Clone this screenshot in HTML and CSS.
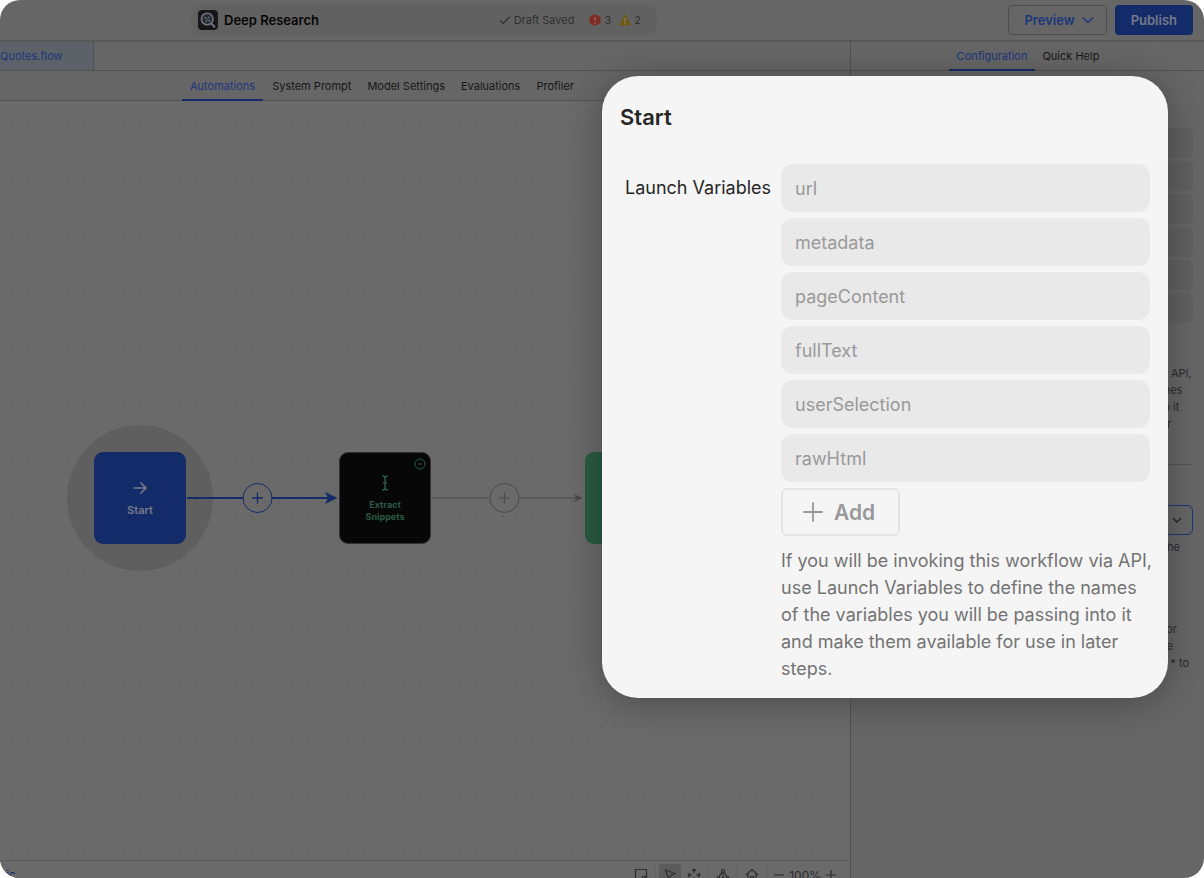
FILE: index.html
```html
<!DOCTYPE html>
<html lang="en">
<head>
<meta charset="utf-8">
<title>Deep Research</title>
<link rel="stylesheet" href="styles.css">
</head>
<body>
<div class="window">
  <div class="app">
    <header class="header">
      <div class="header-main">
        <div class="title-pill">
          <svg class="logo" viewBox="0 0 20 20" aria-hidden="true">
            <rect width="20" height="20" rx="4" fill="#161616"/>
            <circle cx="9.2" cy="9" r="5.8" fill="#2b2c33" stroke="#74727f" stroke-width="1.6"/>
            <path d="M13.400 13.600l3 3.200" stroke="#74727f" stroke-width="2" stroke-linecap="round"/>
            <path d="M7 7.400l4.400 3.400M11 7l-3 4.600" stroke="#64757a" stroke-width=".6"/>
            <circle cx="7.200" cy="7.800" r=".9" fill="#64757a"/><circle cx="10.800" cy="7.200" r=".8" fill="#64757a"/><circle cx="11.200" cy="10.600" r=".9" fill="#64757a"/><circle cx="8.200" cy="11.200" r=".8" fill="#64757a"/>
          </svg>
          <h1 class="app-name">Deep Research</h1>
          <span class="saved"><svg width="12" height="12" viewBox="0 0 12 12" fill="none" stroke="currentColor" stroke-width="1.2"><path d="M1 6.3l3.2 3.2L11 2.6"/></svg>Draft Saved</span>
          <span class="count"><svg width="12" height="12" viewBox="0 0 12 12"><path d="M6 0l5.500 3v6L6 12 .5 9V3z" fill="#7e2d22"/><path d="M6 3v3.600M6 8v1.200" stroke="#8c8480" stroke-width="1.100"/></svg>3</span>
          <span class="count"><svg width="12" height="12" viewBox="0 0 12 12"><path d="M6 1.200l5.300 9.600H.7z" fill="#6e5a14" stroke="#6e5a14" stroke-width="1.200" stroke-linejoin="round"/><path d="M6 4v3.400M6 8.600v1.200" stroke="#8c8480" stroke-width="1.100"/></svg>2</span>
        </div>
      </div>
      <div class="header-actions">
        <button class="btn btn-outline" type="button">Preview<svg width="12" height="8" viewBox="0 0 12 8" fill="none" stroke="currentColor" stroke-width="1.300"><path d="M1 1.500l5 5 5-5"/></svg></button>
        <button class="btn btn-solid" type="button">Publish</button>
      </div>
    </header>

    <div class="body">
      <main class="editor">
        <div class="file-tabs"><a class="file-tab" href="#flow">Quotes.flow</a></div>
        <nav class="tabs editor-tabs">
          <a class="tab active" href="#automations">Automations</a>
          <a class="tab" href="#prompt">System Prompt</a>
          <a class="tab" href="#model">Model Settings</a>
          <a class="tab" href="#evaluations">Evaluations</a>
          <a class="tab" href="#profiler">Profiler</a>
        </nav>
        <section class="canvas">
          <div class="halo"></div>
          <svg class="edge edge-active" width="152" height="32" viewBox="0 0 152 32" fill="none" stroke="#142b69">
            <path d="M0 16h56M85 16h58" stroke-width="2.200"/>
            <circle cx="70.500" cy="16" r="14.500" stroke-width="1"/>
            <path d="M70.500 10.500v11M65 16h11" stroke-width="1.300"/>
            <path d="M138 10l12.500 6-12.500 6 3-6z" fill="#142b69" stroke="none"/>
          </svg>
          <svg class="edge edge-idle" width="152" height="32" viewBox="0 0 152 32" fill="none" stroke="#4a4a4a">
            <path d="M0 16h57M87 16h58" stroke-width="1.200"/>
            <circle cx="72.500" cy="16" r="14.500" stroke-width="1"/>
            <path d="M72.500 10.500v11M67 16h11" stroke-width="1.200"/>
            <path d="M142 12l8.500 4-8.500 4 2-4z" fill="#4a4a4a" stroke="none"/>
          </svg>
          <div class="node node-start">
            <svg width="16" height="14" viewBox="0 0 16 14" fill="none" stroke="currentColor" stroke-width="1.500"><path d="M1.500 7h12M8.500 1.500L14 7l-5.500 5.500"/></svg>
            <span>Start</span>
          </div>
          <div class="node node-extract">
            <svg class="collapse" width="12" height="12" viewBox="0 0 12 12" fill="none" stroke="currentColor"><circle cx="6" cy="6" r="5"/><path d="M4 6h4"/></svg>
            <svg width="8" height="16" viewBox="0 0 8 16" fill="none" stroke="currentColor" stroke-width="1.500"><path d="M1 1q3 0 3 2v10q0 2-3 2M7 1Q4 1 4 3v10q0 2 3 2M2 8h4"/></svg>
            <span>Extract<br>Snippets</span>
          </div>
          <div class="node node-next"></div>
        </section>
        <footer class="toolbar">
          <span class="status">tic</span>
          <div class="tools">
            <button class="tool" type="button" aria-label="Note"><svg viewBox="0 0 14 14"><path d="M8.500 12.500H1.500v-11h11v7M8.500 12.500v-4h4z"/></svg></button>
            <i class="sep"></i>
            <button class="tool selected" type="button" aria-label="Select"><svg viewBox="0 0 14 14"><path d="M2.500 2l9.500 3.500-4.200 1.800L6 12z"/></svg></button>
            <button class="tool" type="button" aria-label="Move"><svg viewBox="0 0 14 14"><path d="M7 1v4M5 2.800L7 1l2 1.800M7 13V9M5 11.200L7 13l2-1.800M1 7h4M2.800 5L1 7l1.800 2M13 7H9M11.200 5L13 7l-1.800 2"/></svg></button>
            <i class="sep"></i>
            <button class="tool" type="button" aria-label="Arrange"><svg viewBox="0 0 14 14"><circle cx="7" cy="3" r="1.500"/><circle cx="2.500" cy="10" r="1.300"/><circle cx="11.500" cy="10" r="1.300"/><circle cx="7" cy="11" r="1.300"/><path d="M6 4.200L3 8.800M8 4.200l3 4.600M7 4.500v5"/></svg></button>
            <i class="sep"></i>
            <button class="tool" type="button" aria-label="Home"><svg viewBox="0 0 14 14"><path d="M1 7l6-5.500L13 7M3 5.500v7h8v-7M5.500 12.500v-4h3v4"/></svg></button>
            <i class="sep"></i>
            <div class="zoom">
              <button class="tool zoom-btn" type="button" aria-label="Zoom out"><svg viewBox="0 0 14 14"><path d="M2 7h10"/></svg></button>
              <span>100%</span>
              <button class="tool zoom-btn" type="button" aria-label="Zoom in"><svg viewBox="0 0 14 14"><path d="M2 7h10M7 2v10"/></svg></button>
            </div>
          </div>
        </footer>
      </main>

      <aside class="panel">
        <nav class="tabs panel-tabs">
          <a class="tab active" href="#configuration">Configuration</a>
          <a class="tab" href="#help">Quick Help</a>
        </nav>
        <div class="panel-body">
          <div class="panel-fields"><i></i><i></i><i></i><i></i><i></i><i></i></div>
          <p class="panel-help">If you will be invoking this workflow via API,<br>use Launch Variables to define the names<br>of the variables you will be passing into it<br>and make them available for use in later<br>steps.</p>
          <hr class="rule">
          <div class="combo"><svg width="10" height="7" viewBox="0 0 10 7" fill="none" stroke="#222" stroke-width="1.300"><path d="M1 1l4 4 4-4"/></svg></div>
          <p class="panel-note note-mid">the</p>
          <div class="panel-extra">
            <p class="panel-note note-near">for</p>
            <p class="panel-note note-far">the</p>
            <p class="panel-note note-end">* to</p>
          </div>
        </div>
      </aside>
    </div>
  </div>

  <section class="dialog" role="dialog" aria-labelledby="dialog-title">
    <h2 id="dialog-title" class="dialog-title">Start</h2>
    <div class="form-row">
      <label class="form-label" for="var-1">Launch Variables</label>
      <div class="form-fields">
        <input class="field" id="var-1" type="text" placeholder="url">
        <input class="field" type="text" placeholder="metadata" aria-label="Variable 2">
        <input class="field" type="text" placeholder="pageContent" aria-label="Variable 3">
        <input class="field" type="text" placeholder="fullText" aria-label="Variable 4">
        <input class="field" type="text" placeholder="userSelection" aria-label="Variable 5">
        <input class="field" type="text" placeholder="rawHtml" aria-label="Variable 6">
        <button class="add" type="button"><svg width="20" height="20" viewBox="0 0 20 20" fill="none" stroke="currentColor" stroke-width="1.800" stroke-linecap="round"><path d="M10 1v18M1 10h18"/></svg>Add</button>
        <p class="help">If you will be invoking this workflow via API, use Launch Variables to define the names of the variables you will be passing into it and make them available for use in later steps.</p>
      </div>
    </div>
  </section>
</div>
</body>
</html>
```
FILE: styles.css
```css
:root {
  --bg: #666;
  --canvas: #6a6a6a;
  --line: #515151;
  --blue: #142b69;
  --link: #1b367c;
}
* { box-sizing: border-box; }
body {
  margin: 0;
  background: #fff;
  font-family: Inter, "Liberation Sans", sans-serif;
  color: #161616;
}
h1, h2, p { margin: 0; }
button { font-family: inherit; }
.window {
  position: relative;
  height: 100vh;
  overflow: hidden;
  border-radius: 20px;
}
.app {
  display: flex;
  flex-direction: column;
  height: calc(100vh + 11px);
  background: var(--bg);
}

.header {
  display: grid;
  grid-template-columns: 1fr 356px;
  align-items: center;
  height: 42px;
  border-bottom: 2px solid #585858;
}
.header-main { display: flex; justify-content: center; }
.title-pill {
  display: flex;
  align-items: center;
  width: 466px;
  height: 30px;
  padding: 0 16px 0 7px;
  border-radius: 8px;
  background: #616161;
  font-size: 11px;
  color: #303030;
}
.logo { width: 20px; height: 20px; }
.app-name {
  flex: 1;
  margin-left: 6px;
  font-size: 13px;
  font-weight: 600;
  color: #060606;
}
.saved, .count { display: flex; align-items: center; gap: 3px; }
.saved { margin-right: 15px; }
.count + .count { margin-left: 8px; }
.header-actions {
  display: flex;
  justify-content: flex-end;
  gap: 8px;
  padding-right: 11px;
}
.btn {
  display: flex;
  align-items: center;
  gap: 7px;
  height: 30px;
  padding: 0 15px;
  border: 1px solid transparent;
  border-radius: 4px;
  font-size: 13px;
  font-weight: 600;
}
.btn-outline { padding-right: 12px; border-color: #4c4c4c; background: none; color: var(--link); }
.btn-solid { background: var(--blue); color: #75798a; }

.body { display: flex; flex: 1; min-height: 0; }
.editor { display: flex; flex: 1; flex-direction: column; min-width: 0; }
.file-tabs { display: flex; height: 29px; border-bottom: 1px solid var(--line); }
.file-tab {
  display: flex;
  align-items: center;
  width: 94px;
  border-right: 1px solid #4b5158;
  background: #5d6268;
  color: var(--link);
  font-size: 11px;
  text-decoration: none;
}
.tabs { display: flex; border-bottom: 1px solid var(--line); }
.tab {
  display: flex;
  align-items: center;
  margin-bottom: -1px;
  padding: 1px 7px 0;
  border-bottom: 2px solid transparent;
  color: #161616;
  font-size: 11px;
  text-decoration: none;
}
.tab.active { border-color: var(--blue); color: var(--link); padding: 1px 8px 0; }
.editor-tabs { gap: 2px; height: 30px; padding-left: 182px; }

.canvas {
  position: relative;
  flex: 1;
  overflow: hidden;
  background: var(--canvas) radial-gradient(circle at 13px 9px, #626262 1px, transparent 1px) 0 0 / 14px 14px;
}
.halo {
  position: absolute;
  left: 67px;
  top: 324px;
  width: 146px;
  height: 146px;
  border-radius: 50%;
  background: rgba(0, 0, 0, .1);
}
.edge { position: absolute; top: 381px; }
.edge-active { left: 187px; }
.edge-idle { left: 432px; }
.node {
  position: absolute;
  top: 351px;
  display: flex;
  flex-direction: column;
  align-items: center;
  justify-content: center;
  gap: 8px;
  width: 92px;
  height: 92px;
  padding-top: 2px;
  border-radius: 9px;
  text-align: center;
}
.node-start {
  left: 94px;
  background: var(--blue);
  color: #767b8a;
  font-size: 11px;
  font-weight: 600;
}
.node-extract {
  left: 339px;
  border: 1px solid #333;
  background: #070707;
  color: #2b5b44;
  font-size: 9px;
  line-height: 12px;
  font-weight: 700;
}
.node-next { left: 585px; background: #2a5a42; }
.collapse { position: absolute; top: 5px; right: 4px; }

.toolbar {
  display: flex;
  align-items: center;
  justify-content: space-between;
  height: 29px;
  padding: 0 12px 0 3px;
  border-top: 1px solid #5b5b5b;
  background: var(--canvas);
  color: #2b2b2b;
}
.status { color: var(--blue); font-size: 11px; }
.tools { display: flex; align-items: center; gap: 2px; }
.tool {
  display: flex;
  align-items: center;
  justify-content: center;
  width: 22px;
  height: 22px;
  padding: 0;
  border: 0;
  border-radius: 3px;
  background: none;
}
.tool svg {
  width: 14px;
  height: 14px;
  fill: none;
  stroke: #2e2e2e;
  stroke-width: 1.2;
}
.tool.selected { background: #5b5b5b; }
.sep { width: 1px; height: 20px; margin: 0 1px; background: #626262; }
.zoom { display: flex; align-items: center; gap: 3px; padding-left: 2px; font-size: 12px; }
.zoom-btn { width: 14px; }

.panel {
  display: flex;
  flex-direction: column;
  width: 354px;
  border-left: 1px solid var(--line);
}
.panel-tabs { justify-content: center; height: 29px; }
.panel-body {
  display: flex;
  flex-direction: column;
  padding: 57px 11px 0 111px;
  font-size: 11px;
  line-height: 17px;
  color: #2b2b2b;
}
.panel-fields { display: grid; gap: 3px; }
.panel-fields i { height: 30px; border-radius: 6px; background: #606060; }
.panel-help { margin-top: 42px; padding-left: 3px; white-space: nowrap; }
.rule { width: 100%; margin: 14px 0 40px; border: 0; border-top: 1px solid #565656; }
.combo {
  display: flex;
  align-items: center;
  justify-content: flex-end;
  height: 30px;
  padding-right: 10px;
  border: 1px solid var(--link);
  border-radius: 6px;
}
.panel-note { text-align: right; }
.note-mid { margin-top: 4px; padding-right: 13px; }
.panel-extra { margin-top: 65px; }
.note-near { padding-right: 16px; }
.note-far { padding-right: 20px; }
.note-end { padding-right: 4px; }

.dialog {
  position: absolute;
  top: 76px;
  right: 36px;
  width: 566px;
  padding: 28px 18px 16px;
  border-radius: 36px;
  background: #f5f5f5;
  box-shadow: 0 4px 36px rgba(0, 0, 0, .3);
}
.dialog-title {
  font-size: 22px;
  line-height: 26px;
  font-weight: 600;
  color: #262626;
}
.form-row {
  display: grid;
  grid-template-columns: 144px 1fr;
  gap: 12px;
  margin-top: 34px;
  padding-left: 5px;
}
.form-label {
  font-size: 18px;
  line-height: 48px;
  color: #262626;
  white-space: nowrap;
}
.form-fields { display: flex; flex-direction: column; gap: 6px; }
.field {
  width: 100%;
  height: 48px;
  padding: 0 14px;
  border: 0;
  border-radius: 12px;
  background: #e9e9e9;
  font-family: inherit;
  font-size: 18px;
}
.field::placeholder { color: #999; opacity: 1; }
.add {
  display: flex;
  align-items: center;
  align-self: flex-start;
  gap: 11px;
  height: 48px;
  padding: 0 23px 0 20px;
  border: 2px solid #e4e4e4;
  border-radius: 6px;
  background: none;
  color: #999;
  font-size: 21px;
  font-weight: 600;
}
.help {
  margin: 5px -8px 0 0;
  font-size: 18px;
  line-height: 27px;
  color: #737373;
}
```
